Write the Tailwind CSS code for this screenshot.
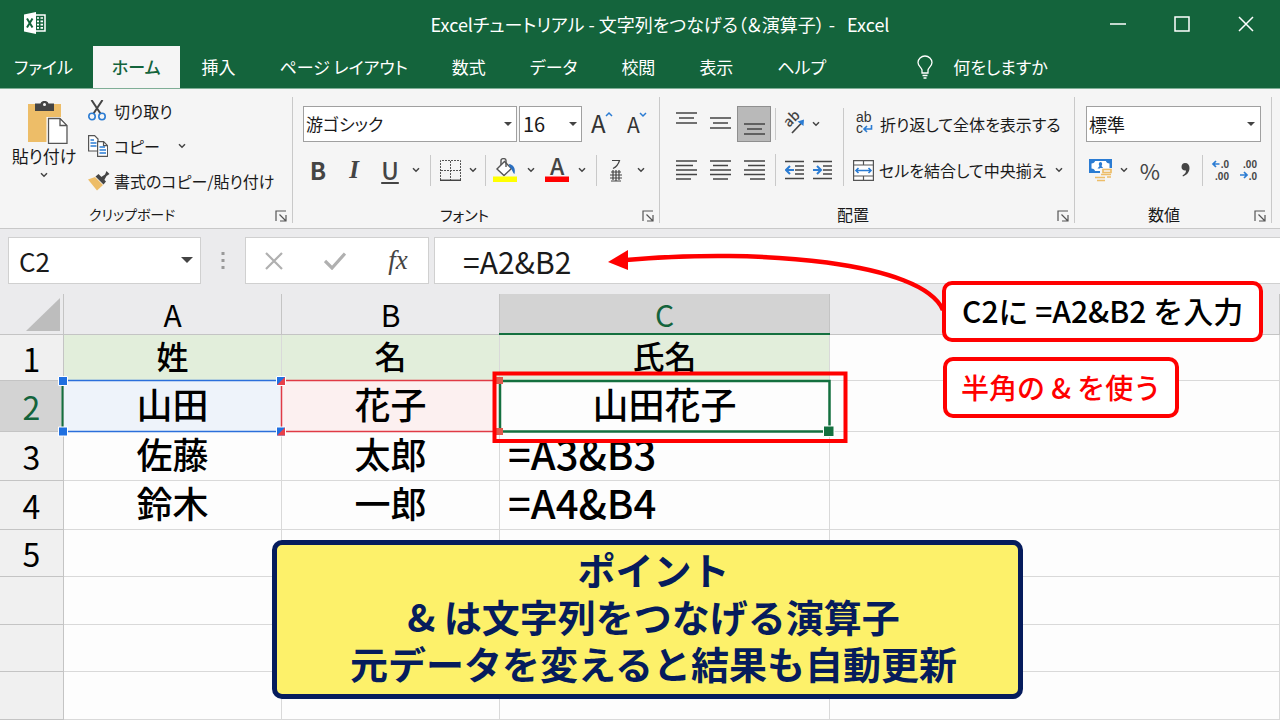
<!DOCTYPE html>
<html lang="ja">
<head>
  <meta charset="UTF-8">
  <meta name="viewport" content="width=device-width, initial-scale=1.0">
  <title>Excelチュートリアル - 文字列をつなげる</title>
  <script src="https://cdn.jsdelivr.net/npm/@tailwindcss/browser@4"></script>
</head>
<body class="min-h-screen overflow-x-hidden bg-[#fdfdfd] text-[#1a1a1a] font-['Noto_Sans_CJK_JP','Noto_Sans',sans-serif] [font-feature-settings:'palt']">
  <!-- 共通アイコン -->
  <svg class="hidden">
    <symbol id="chev" viewBox="0 0 8 6"><path d="M1 1.2 4 4.2 7 1.2" fill="none" stroke="#444" stroke-width="1.5"/></symbol>
    <symbol id="tri" viewBox="0 0 12 6"><path d="M0 0h12L6 6z" fill="#444"/></symbol>
    <symbol id="launch" viewBox="0 0 12 12"><path d="M1 11V1h10M4.500 4.500l6 6M11 5v6H5" fill="none" stroke="#555" stroke-width="1.200"/></symbol>
  </svg>

  <header class="bg-[#14643c] text-white">
    <!-- タイトルバー -->
    <div class="flex h-[46px] items-center">
      <div class="w-[234px] shrink-0 pl-6">
        <svg class="w-[22px] h-[22px]" viewBox="0 0 22 22">
          <path d="M12 3h9v16h-9" fill="none" stroke="#fff" stroke-width="1.500"/>
          <path d="M13 6h2M16.500 6H19M13 9.300h2M16.500 9.300H19M13 12.600h2M16.500 12.600H19M13 15.900h2M16.500 15.900H19" stroke="#fff" stroke-width="1.700"/>
          <path d="M0 2.500 12 0v22L0 19.500z" fill="#fff"/>
          <path d="M3 6.500l5.500 9M8.500 6.500 3 15.500" stroke="#14643c" stroke-width="2"/>
        </svg>
      </div>
      <h1 class="flex-1 pt-[2px] text-center text-[18px] leading-6 whitespace-nowrap">Excelチュートリアル - 文字列をつなげる（＆演算子） -&nbsp;&nbsp; Excel</h1>
      <div class="flex shrink-0 pt-[2px] pr-[2px]">
        <button class="flex h-10 w-16 items-center justify-center" aria-label="最小化"><svg class="w-4 h-4" viewBox="0 0 16 16"><path d="M0 8h16" stroke="#fff" stroke-width="1.500"/></svg></button>
        <button class="flex h-10 w-16 items-center justify-center" aria-label="最大化"><svg class="w-4 h-4" viewBox="0 0 16 16"><path d="M1 1h14v14H1z" fill="none" stroke="#fff" stroke-width="1.500"/></svg></button>
        <button class="flex h-10 w-16 items-center justify-center" aria-label="閉じる"><svg class="w-4 h-4" viewBox="0 0 16 16"><path d="M1 1l14 14M15 1 1 15" stroke="#fff" stroke-width="1.500"/></svg></button>
      </div>
    </div>
    <!-- タブ -->
    <nav class="flex h-[42px] items-stretch text-[17px] whitespace-nowrap">
      <button class="pr-5 pl-[14px]">ファイル</button>
      <button class="bg-[#f5f5f5] px-[19px] font-medium text-[#14643c]">ホーム</button>
      <button class="px-[22px]">挿入</button>
      <button class="px-[22px]">ページ レイアウト</button>
      <button class="px-[22px]">数式</button>
      <button class="px-[22px]">データ</button>
      <button class="px-[22px]">校閲</button>
      <button class="px-[22px]">表示</button>
      <button class="px-[22px]">ヘルプ</button>
      <button class="ml-[69px] flex items-center gap-5">
        <svg class="w-4 h-6" viewBox="0 0 16 24"><path d="M5 18v-3C4.500 12.500 1 11 1 7.500a7 6.500 0 0 1 14 0C15 11 11.500 12.500 11 15v3zM5.500 20.500h5M6.500 23h3" fill="none" stroke="#fff" stroke-width="1.300"/></svg>
        何をしますか
      </button>
    </nav>
  </header>

  <!-- リボン -->
  <section class="flex h-[141px] border-t border-b border-t-[#7fae96] border-b-[#c8c8c8] bg-[#f5f5f5] pt-2 pb-[5px] whitespace-nowrap">
    <!-- クリップボード -->
    <div class="flex w-[293px] shrink-0 flex-col border-r border-[#c9c9c9]">
      <div class="flex h-[104px] shrink-0">
        <button class="flex w-[88px] shrink-0 flex-col items-center pt-1 text-[17px] leading-6">
          <svg class="ml-2 h-[43px] w-10 shrink-0" viewBox="0 0 40 43">
            <path d="M0 3h33v38H0z" fill="#edbd68"/>
            <path d="M7 2.500h5.500C13 .500 15 0 16.500 0s3.500.500 4 2.500H26V10H7z" fill="#444"/><circle cx="16.500" cy="3.600" r="1.500" fill="#f5f5f5"/>
            <path d="M20 17.500h12l7 7V42.500H20z" fill="#fff" stroke="#fff" stroke-width="3"/>
            <path d="M20.500 17.500H32l7 7v18H20.500zM32 17.500v7h7" fill="#fff" stroke="#555" stroke-width="1.300"/>
          </svg>
          <span>貼り付け</span>
          <svg class="mt-1 h-[6px] w-2"><use href="#chev"/></svg>
        </button>
        <div class="flex shrink-0 flex-col text-[16px]">
          <button class="flex h-[27px] items-center gap-2">
            <svg class="h-[21px] w-[18px]" viewBox="0 0 18 21"><path d="M3.500 0 12.800 14M14.500 0 5.200 14" stroke="#444" stroke-width="2" fill="none"/><circle cx="4" cy="16.500" r="3.200" fill="none" stroke="#2b7cd3" stroke-width="1.600"/><circle cx="14" cy="16.500" r="3.200" fill="none" stroke="#2b7cd3" stroke-width="1.600"/></svg>
            切り取り
          </button>
          <button class="mt-2 flex h-[27px] items-center gap-[6px]">
            <svg class="h-[22px] w-5" viewBox="0 0 20 22"><path d="M.600.600h6L10 4v12H.600z" fill="#fff" stroke="#555" stroke-width="1.200"/><path d="M2.500 5H6M2.500 8h6M2.500 11h6" stroke="#2b7cd3" stroke-width="1.300"/><path d="M9.600 6.600h6l4 4v10.800h-10zM15.500 6.600v4h4" fill="#fff" stroke="#555" stroke-width="1.200"/><path d="M11.500 12h5.500M11.500 15H18M11.500 18H18" stroke="#2b7cd3" stroke-width="1.300"/></svg>
            コピー
            <svg class="ml-3 h-[6px] w-2"><use href="#chev"/></svg>
          </button>
          <button class="mt-2 flex h-[28px] items-center gap-1">
            <svg class="h-5 w-[22px]" viewBox="0 0 22 20"><path d="M0 8.500 7 6l8 8-6 5.500z" fill="#edbd68"/><path d="M7.500 5.500l3-2.500 7.500 7.500-2.500 3z" fill="#444"/><path d="M12.500 6.500 17 3.500 18.500 0 21.500 3 18.500 5 16 9.500z" fill="#444"/></svg>
            書式のコピー/貼り付け
          </button>
        </div>
      </div>
      <div class="flex flex-1 items-center pt-1 pr-[5px] pl-[89px] text-[14px] leading-none"><span>クリップボード</span><button class="ml-auto pt-1" aria-label="クリップボードの設定"><svg class="h-3 w-3"><use href="#launch"/></svg></button></div>
    </div>

    <!-- フォント -->
    <div class="flex w-[367px] shrink-0 flex-col border-r border-[#c9c9c9]">
      <div class="flex h-[104px] shrink-0 flex-col pt-[9px] pl-[7px]">
        <div class="flex h-9 items-center pl-[3px]">
          <div class="relative h-9 w-[214px] shrink-0">
            <select aria-label="フォント名" class="h-full w-full appearance-none border border-[#a0a0a0] bg-white px-[2px] text-[17px]"><option>游ゴシック</option></select>
            <svg class="pointer-events-none absolute top-4 right-[5px] h-1 w-2"><use href="#tri"/></svg>
          </div>
          <div class="relative ml-[2px] h-9 w-[63px] shrink-0">
            <select aria-label="フォント サイズ" class="h-full w-full appearance-none border border-[#a0a0a0] bg-white px-[3px] text-[20px]"><option>16</option></select>
            <svg class="pointer-events-none absolute top-4 right-[5px] h-1 w-2"><use href="#tri"/></svg>
          </div>
          <button class="flex w-9 justify-center" aria-label="フォント サイズの拡大"><svg class="h-7 w-6 overflow-visible" viewBox="0 0 24 28"><text x="3" y="23" font-size="24" fill="#333">A</text><path d="M18 6l3-3 3 3" fill="none" stroke="#2b7cd3" stroke-width="1.500"/></svg></button>
          <button class="flex w-9 justify-center" aria-label="フォント サイズの縮小"><svg class="h-7 w-6 overflow-visible" viewBox="0 0 24 28"><text x="3" y="23" font-size="21" fill="#333">A</text><path d="M16 3l3 3 3-3" fill="none" stroke="#2b7cd3" stroke-width="1.500"/></svg></button>
        </div>
        <div class="mt-[10px] flex h-9 items-center text-[24px] text-[#444]">
          <button class="w-9 leading-8 font-bold">B</button>
          <button class="w-9 font-['Liberation_Serif',serif] text-[25px] leading-8 font-bold italic">I</button>
          <button class="w-9 leading-8 font-medium underline decoration-2 underline-offset-2">U</button>
          <button class="flex w-4 justify-center" aria-label="下線の種類"><svg class="h-[6px] w-2"><use href="#chev"/></svg></button>
          <i class="mr-1 ml-[6px] h-[31px] w-px bg-[#c9c9c9]"></i>
          <button class="flex w-[30px] justify-center" aria-label="罫線"><svg class="h-[21px] w-[21px]" viewBox="0 0 21 21"><path d="M.500 20V.500h20V20M10.500 1v19M1 10.500h19" fill="none" stroke="#555" stroke-dasharray="2 1"/><path d="M0 20.300h21" stroke="#444" stroke-width="1.500"/></svg></button>
          <button class="flex w-4 justify-center" aria-label="罫線の種類"><svg class="h-[6px] w-2"><use href="#chev"/></svg></button>
          <i class="mx-1 h-[31px] w-px bg-[#c9c9c9]"></i>
          <button class="flex w-[30px] justify-center" aria-label="塗りつぶしの色"><svg class="h-6 w-6" viewBox="0 0 24 24"><path d="M4 11 11.500 3.500l7 7L11 17.500z" fill="#fff" stroke="#555" stroke-width="1.400"/><path d="M8 7V2.500C8 0 13 0 13 2.500V9" fill="none" stroke="#555" stroke-width="1.400"/><path d="M16 6c4 .500 7 4 5.500 10-2-1-2-5-5-7z" fill="#2b6fc0"/><path d="M0 18.500h24V24H0z" fill="#ff0"/></svg></button>
          <button class="flex w-[22px] justify-center" aria-label="塗りつぶしの色を選択"><svg class="h-[6px] w-2"><use href="#chev"/></svg></button>
          <button class="flex w-[30px] justify-center" aria-label="フォントの色"><svg class="h-6 w-6 overflow-visible" viewBox="0 0 24 24"><text x="5" y="17" font-size="23" font-weight="500" fill="#444">A</text><path d="M0 18.500h24V24H0z" fill="#f00"/></svg></button>
          <button class="flex w-5 justify-center" aria-label="フォントの色を選択"><svg class="h-[6px] w-2"><use href="#chev"/></svg></button>
          <i class="mx-1 h-[31px] w-px bg-[#c9c9c9]"></i>
          <button class="flex w-[30px] justify-center" aria-label="ふりがな"><svg class="h-[23px] w-3" viewBox="0 0 12 23"><path d="M2 1.500h7.500C8.500 5 6 8 3 9.500M1 13h10M3 11v10M6 11v11M9 11v10M0 16h12M0 19h12M1 22h10" fill="none" stroke="#444" stroke-width="1.200"/></svg></button>
          <button class="flex w-5 justify-center" aria-label="ふりがなの設定"><svg class="h-[6px] w-2"><use href="#chev"/></svg></button>
        </div>
      </div>
      <div class="flex flex-1 items-center pt-1 pr-[5px] pl-[147px] text-[15px] leading-none"><span>フォント</span><button class="ml-auto pt-1" aria-label="フォントの設定"><svg class="h-3 w-3"><use href="#launch"/></svg></button></div>
    </div>

    <!-- 配置 -->
    <div class="flex w-[415px] shrink-0 flex-col border-r border-[#c9c9c9]">
      <div class="flex h-[104px] shrink-0 pt-[9px] pl-[9px]">
        <div class="flex w-[174px] shrink-0 flex-col">
          <div class="flex h-9 items-center">
            <button class="flex w-[34px] justify-center" aria-label="上揃え"><svg class="h-6 w-[21px]" viewBox="0 0 21 24"><path d="M0 1h21M3 6h15M0 11h21" stroke="#444" stroke-width="1.500"/></svg></button>
            <button class="flex w-[34px] justify-center" aria-label="上下中央揃え"><svg class="h-6 w-[21px]" viewBox="0 0 21 24"><path d="M0 6h21M3 11h15M0 16h21" stroke="#444" stroke-width="1.500"/></svg></button>
            <button class="flex h-9 w-[34px] items-center justify-center border border-[#8f8f8f] bg-[#b9b9b9]" aria-label="下揃え"><svg class="h-6 w-[21px]" viewBox="0 0 21 24"><path d="M0 12h21M3 17h15M0 22h21" stroke="#444" stroke-width="1.500"/></svg></button>
            <i class="mx-1 h-8 w-px bg-[#c9c9c9]"></i>
            <button class="flex w-7 justify-center" aria-label="方向"><svg class="h-[22px] w-[22px] overflow-visible" viewBox="0 0 22 22"><text x="0" y="0" font-size="14" font-weight="500" fill="#444" transform="translate(6 15) rotate(-45)">ab</text><path d="M9 20 19 9.500" stroke="#444" stroke-width="1.700"/><path d="M14.500 8.500 21 6.500 20.500 13z" fill="#2b7cd3"/></svg></button>
            <button class="flex w-4 justify-center" aria-label="方向を選択"><svg class="h-[6px] w-2"><use href="#chev"/></svg></button>
          </div>
          <div class="mt-[10px] flex h-9 items-center">
            <button class="flex w-[34px] justify-center" aria-label="左揃え"><svg class="h-5 w-[21px]" viewBox="0 0 21 20"><path d="M0 1h21M0 5.500h17M0 10h21M0 14.500h21M0 19h15" stroke="#444" stroke-width="1.500"/></svg></button>
            <button class="flex w-[34px] justify-center" aria-label="中央揃え"><svg class="h-5 w-[21px]" viewBox="0 0 21 20"><path d="M0 1h21M3 5.500h15M0 10h21M0 14.500h21M3 19h15" stroke="#444" stroke-width="1.500"/></svg></button>
            <button class="flex w-[34px] justify-center" aria-label="右揃え"><svg class="h-5 w-[21px]" viewBox="0 0 21 20"><path d="M0 1h21M4 5.500h17M0 10h21M0 14.500h21M6 19h15" stroke="#444" stroke-width="1.500"/></svg></button>
            <i class="mx-1 h-8 w-px bg-[#c9c9c9]"></i>
            <button class="flex w-7 justify-center" aria-label="インデントを減らす"><svg class="h-5 w-[19px]" viewBox="0 0 19 20"><path d="M0 1.500h19M10 6h9M10 10h9M10 14h9M0 18.500h19" stroke="#444" stroke-width="1.400"/><path d="M9 10H1.500M5 6l-4 4 4 4" fill="none" stroke="#2b7cd3" stroke-width="2"/></svg></button>
            <button class="flex w-7 justify-center" aria-label="インデントを増やす"><svg class="h-5 w-[19px]" viewBox="0 0 19 20"><path d="M0 1.500h19M10 6h9M10 10h9M10 14h9M0 18.500h19" stroke="#444" stroke-width="1.400"/><path d="M0 10h7.500M4 6l4 4-4 4" fill="none" stroke="#2b7cd3" stroke-width="2"/></svg></button>
          </div>
        </div>
        <i class="mt-[2px] h-[78px] w-px bg-[#c9c9c9]"></i>
        <div class="flex flex-col pl-[9px] text-[16px]">
          <button class="flex h-9 items-center gap-[5px]">
            <svg class="h-[22px] w-[22px] overflow-visible font-['Liberation_Sans',sans-serif]" viewBox="0 0 22 22"><text x="3" y="9" font-size="14" fill="#333">ab</text><text x="3" y="20" font-size="14" fill="#333">c</text><path d="M18.500 12v4H11M14 13l-3 3 3 3" fill="none" stroke="#2b7cd3" stroke-width="1.600"/></svg>
            折り返して全体を表示する
          </button>
          <button class="mt-[10px] flex h-9 items-center gap-[5px]">
            <svg class="h-[21px] w-[21px]" viewBox="0 0 21 21"><path d="M.600.600h19.800v19.800H.600zM.600 5h19.800M.600 16h19.800M10.500.600V5M10.500 16v4.500" fill="#fff" stroke="#555" stroke-width="1.200"/><path d="M3 10.500h15M5.500 8 3 10.500 5.500 13M15.500 8l2.500 2.500-2.500 2.500" fill="none" stroke="#2b7cd3" stroke-width="1.600"/></svg>
            セルを結合して中央揃え
            <svg class="ml-1 h-[6px] w-2"><use href="#chev"/></svg>
          </button>
        </div>
      </div>
      <div class="flex flex-1 items-center pt-1 pr-[5px] pl-[177px] text-[16px] leading-none"><span>配置</span><button class="ml-auto pt-1" aria-label="配置の設定"><svg class="h-3 w-3"><use href="#launch"/></svg></button></div>
    </div>

    <!-- 数値 -->
    <div class="flex w-[197px] shrink-0 flex-col border-r border-[#c9c9c9]">
      <div class="flex h-[104px] shrink-0 flex-col pt-[9px] pl-[11px]">
        <div class="relative h-9 w-[175px]">
          <select aria-label="表示形式" class="h-full w-full appearance-none border border-[#a0a0a0] bg-white px-[2px] text-[18px]"><option>標準</option></select>
          <svg class="pointer-events-none absolute top-4 right-[6px] h-1 w-2"><use href="#tri"/></svg>
        </div>
        <div class="mt-[10px] flex h-9 items-center text-[#444]">
          <button class="flex w-[30px] justify-center" aria-label="通貨表示形式"><svg class="h-[23px] w-6" viewBox="0 0 24 23"><path d="M0 0h23v14H0z" fill="#2b7cd3"/><path d="M2.500 4.500C6 4 6 2 6 2h11s0 2 3.500 2.500v5C17 10 17 12 17 12H6s0-2-3.500-2.500z" fill="#fff"/><path d="M11.500 3c2 0 2 3 1 4l2 2.500h-6l2-2.500c-1-1-1-4 1-4z" fill="#2b7cd3"/><path d="M11 9h13v14H11z" fill="#f5f5f5"/><path d="M14 10.500h8v3h-8zM12 15.500h10M6 18.500h10M18 18h4M8 21.500h8" fill="none" stroke="#edbd68" stroke-width="1.700"/></svg></button>
          <button class="flex w-4 justify-center" aria-label="通貨を選択"><svg class="h-[6px] w-2"><use href="#chev"/></svg></button>
          <button class="w-9 text-[22px] leading-8">%</button>
          <button class="flex w-[34px] justify-center" aria-label="桁区切りスタイル"><svg class="h-4 w-[9px]" viewBox="0 0 9 16"><path d="M4 1c3 0 4.500 2 4.500 5C8.500 10 6 13 2 14.500l-.500-1C4 12 5 10.500 5 8.500 2.500 9 .500 7.500.500 5 .500 2.500 2 1 4 1z" fill="#444"/></svg></button>
          <i class="mr-1 h-[31px] w-px bg-[#c9c9c9]"></i>
          <button class="flex w-7 justify-center" aria-label="小数点以下の表示桁数を増やす"><svg class="h-[22px] w-[18px] overflow-visible font-['Liberation_Sans',sans-serif]" viewBox="0 0 18 22"><text x="17" y="9" text-anchor="end" font-size="10" font-weight="bold" fill="#444">.0</text><text x="17" y="21" text-anchor="end" font-size="10" font-weight="bold" fill="#444">.00</text><path d="M7.500 5h-6M4 2 1 5l3 3" fill="none" stroke="#2b7cd3" stroke-width="1.700"/></svg></button>
          <button class="flex w-7 justify-center" aria-label="小数点以下の表示桁数を減らす"><svg class="h-[22px] w-[18px] overflow-visible font-['Liberation_Sans',sans-serif]" viewBox="0 0 18 22"><text x="17" y="9" text-anchor="end" font-size="10" font-weight="bold" fill="#444">.00</text><text x="17" y="21" text-anchor="end" font-size="10" font-weight="bold" fill="#444">.0</text><path d="M0 16h6.500M4 13l3 3-3 3" fill="none" stroke="#2b7cd3" stroke-width="1.700"/></svg></button>
        </div>
      </div>
      <div class="flex flex-1 items-center pt-1 pr-[5px] pl-[73px] text-[16px] leading-none"><span>数値</span><button class="ml-auto pt-1" aria-label="数値の設定"><svg class="h-3 w-3"><use href="#launch"/></svg></button></div>
    </div>
  </section>

  <main class="relative">
    <!-- 数式バー -->
    <div class="flex h-[65px] bg-[#ebebed] pt-2 pl-2">
      <div class="relative h-[47px] w-[193px] shrink-0">
        <input aria-label="名前ボックス" value="C2" class="h-full w-full border border-[#d0d0d0] bg-white pl-[10px] text-[26px]">
        <svg class="absolute top-5 right-2 h-[6px] w-3"><use href="#tri"/></svg>
      </div>
      <svg class="mt-[14px] ml-5 h-5 w-1 shrink-0" viewBox="0 0 4 20"><path d="M.500 1h3v3h-3zM.500 8h3v3h-3zM.500 15h3v3h-3z" fill="#999"/></svg>
      <div class="ml-5 flex h-[47px] w-[184px] shrink-0 items-center border border-[#d0d0d0] bg-white">
        <button class="flex w-[56px] justify-center" aria-label="キャンセル"><svg class="h-[18px] w-[18px]" viewBox="0 0 18 18"><path d="M1 1l16 16M17 1 1 17" stroke="#b0b0b0" stroke-width="2.200"/></svg></button>
        <button class="flex w-[66px] justify-center" aria-label="入力"><svg class="h-[18px] w-[22px]" viewBox="0 0 22 18"><path d="M1 9l7 7L21 1.500" fill="none" stroke="#b0b0b0" stroke-width="3.200"/></svg></button>
        <button class="w-[60px] font-['Liberation_Serif',serif] text-[27px] text-[#444] italic">fx</button>
      </div>
      <input aria-label="数式バー" value="=A2&amp;B2" class="ml-[5px] h-[47px] min-w-0 flex-1 border border-r-0 border-[#d0d0d0] bg-white pl-7 text-[30px]">
    </div>

    <!-- シート -->
    <table class="w-full table-fixed border-separate border-spacing-0 text-center text-[36px] leading-none text-black [&_td]:border-r [&_td]:border-b [&_td]:border-[#d9d9d9] [&_td]:px-0 [&_td]:pt-0 [&_td]:pb-[6px] [&_td]:font-medium [&_th]:border-r [&_th]:border-b [&_th]:border-[#c4c4c4] [&_th]:p-0 [&_th]:font-normal [&_tbody_th]:bg-[#f0f0f0] [&_tbody_th]:text-[32px]">
      <colgroup><col class="w-[64px]"><col class="w-[218px]"><col class="w-[218px]"><col class="w-[330px]"><col></colgroup>
      <thead class="bg-[#ebebed] text-[30px]">
        <tr class="h-[41px]">
          <th><svg class="ml-[26px] h-[33px] w-[34px]" viewBox="0 0 34 33"><path d="M34 0v33H0z" fill="#bdbdbd"/></svg></th>
          <th scope="col">A</th><th scope="col">B</th>
          <th scope="col" class="bg-[#d3d3d3] text-[#14643c]">C</th>
          <th></th>
        </tr>
      </thead>
      <tbody>
        <tr class="h-[46px] text-[32px]"><th scope="row">1</th><td class="bg-[#e2eedb]">姓</td><td class="bg-[#e2eedb]">名</td><td class="bg-[#e2eedb]">氏名</td><td></td></tr>
        <tr class="h-[51px]"><th scope="row" class="text-[#14643c]"><span class="flex h-[50px] items-center justify-center bg-[#d3d3d3]">2</span></th><td class="bg-[#eef3fa]">山田</td><td class="bg-[#fcf0f0]">花子</td><td>山田花子</td><td></td></tr>
        <tr class="h-[49px]"><th scope="row">3</th><td>佐藤</td><td>太郎</td><td class="text-left"><span class="pl-2 text-[40px]">=A3&amp;B3</span></td><td></td></tr>
        <tr class="h-[49px]"><th scope="row">4</th><td>鈴木</td><td>一郎</td><td class="text-left"><span class="pl-2 text-[40px]">=A4&amp;B4</span></td><td></td></tr>
        <tr class="h-[47px]"><th scope="row">5</th><td></td><td></td><td></td><td></td></tr>
        <tr class="h-[48px]"><th></th><td></td><td></td><td></td><td></td></tr>
        <tr class="h-[47px]"><th></th><td></td><td></td><td></td><td></td></tr>
        <tr class="h-[48px]"><th></th><td></td><td></td><td></td><td></td></tr>
      </tbody>
    </table>

    <!-- 選択範囲と参照枠、矢印 -->
    <svg class="pointer-events-none absolute top-0 left-0 h-[220px] w-[960px]" viewBox="0 229 960 220">
      <path d="M499 334h331" stroke="#14703f" stroke-width="2"/>
      <path d="M62.500 382v49" stroke="#14703f" stroke-width="2"/>
      <path d="M63 380.500h218M63 431.500h218" stroke="#2b6fdb" stroke-width="1.500"/>
      <path d="M281 380.500h218M281 431.500h218M281.500 381v50" stroke="#e03a45" stroke-width="1.500"/>
      <g stroke="#fff">
        <path d="M58.500 376.500h9v9h-9zM58.500 427h9v9h-9zM276.500 376.500h9v9h-9zM276.500 427h9v9h-9z" fill="#2070e0"/>
      </g>
      <path d="M285 377v8h-8zM285 427.500v8h-8z" fill="#e8404a"/>
      <path d="M500 381h329.500v50.500H500z" fill="none" stroke="#14703f" stroke-width="2.500"/>
      <path d="M495 377h8v7h-8zM495 428h8v7h-8z" fill="#e0584c"/>
      <path d="M823.500 426h10.500v10.500h-10.500z" fill="#14703f" stroke="#fff"/>
      <path d="M494.500 373.500h351v67.500h-351z" fill="none" stroke="#f00" stroke-width="4"/>
      <path d="M943 310C922 262 760 248 626 260" fill="none" stroke="#f00" stroke-width="4.500"/>
      <path d="M608 262l20-12v20z" fill="#f00"/>
    </svg>

    <!-- 吹き出し -->
    <p class="absolute top-[52px] left-[942px] flex h-[61px] items-center rounded-[10px] border-4 border-[#f00] bg-white px-4 pb-[2px] text-[30px] font-medium whitespace-nowrap text-black [font-feature-settings:normal]">C2に =A2&amp;B2 を入力</p>
    <p class="absolute top-[128px] left-[943px] flex h-[61px] items-center rounded-[10px] border-4 border-[#f00] bg-white px-[14px] pb-[2px] text-[28px] font-medium whitespace-nowrap text-[#f00] [font-feature-settings:normal]">半角の &amp; を使う</p>

    <!-- ポイント -->
    <div class="absolute top-[311px] left-[272px] w-[751px] rounded-[10px] border-[5px] border-[#061c5c] bg-[#fdf16a] pb-2 pl-3 text-center text-[38px] leading-[47px] font-bold whitespace-nowrap text-[#061c5c] [font-feature-settings:normal]">
      <h2>ポイント</h2>
      <p>&amp; は文字列をつなげる演算子</p>
      <p>元データを変えると結果も自動更新</p>
    </div>
  </main>
</body>
</html>
